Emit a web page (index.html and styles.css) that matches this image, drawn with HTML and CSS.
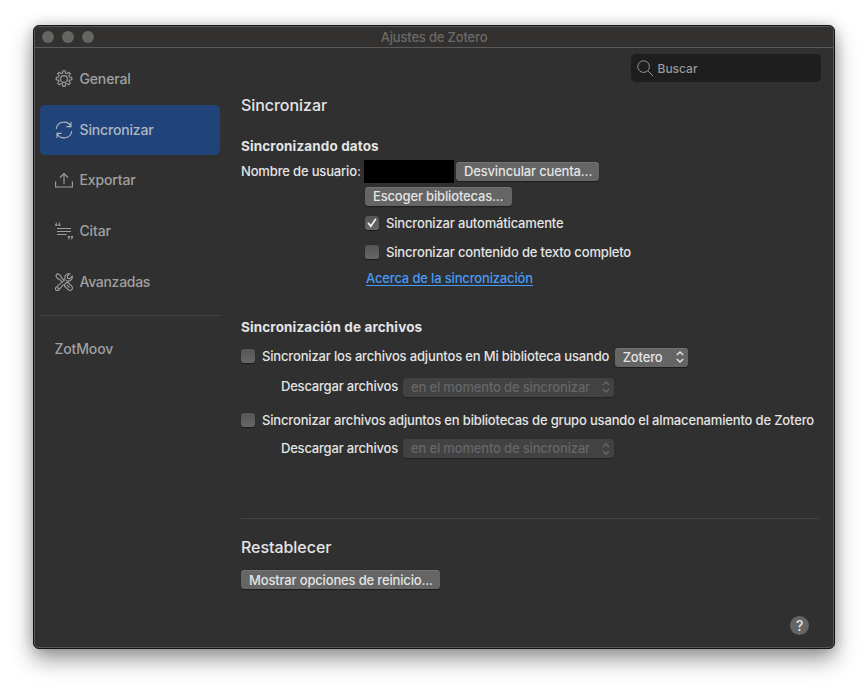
FILE: index.html
```html
<!DOCTYPE html>
<html lang="es">
<head>
<meta charset="utf-8">
<title>Ajustes de Zotero</title>
<link rel="stylesheet" href="styles.css">
</head>
<body>
<div class="window">
  <header class="titlebar">
    <div class="lights"><i></i><i></i><i></i></div>
    <span class="title">Ajustes de Zotero</span>
  </header>
  <div class="body">
    <nav class="sidebar">
      <div class="item">
        <svg viewBox="0 0 18 18"><circle cx="9" cy="9" r="3.4"/><path d="M7.500 3.200 7.900.8h2.200l.4 2.400 1.200.5 2-1.400 1.600 1.600-1.400 2 .5 1.200 2.400.4v2.200l-2.400.4-.5 1.200 1.400 2-1.600 1.600-2-1.400-1.200.5-.4 2.400H7.900l-.4-2.400-1.200-.5-2 1.400-1.600-1.600 1.400-2-.5-1.200-2.400-.4V7.500l2.400-.4.5-1.200-1.400-2 1.600-1.600 2 1.400z"/></svg>
        <span class="t-general">General</span>
      </div>
      <div class="item selected">
        <svg viewBox="0 0 18 18"><path d="M1.200 8A7.800 7.800 0 0 1 15.800 5.300M16 1v4.600h-4.600M16.800 10A7.800 7.800 0 0 1 2.200 12.700M2 17v-4.600h4.600"/></svg>
        <span class="t-sync">Sincronizar</span>
      </div>
      <div class="item">
        <svg viewBox="0 0 18 18"><path d="M.6 10.500V16h16.800v-5.500M9 13V2.500M5 6.500l4-4 4 4"/></svg>
        <span class="t-export">Exportar</span>
      </div>
      <div class="item">
        <svg viewBox="0 0 18 18"><path d="M2 6.500h14M2 9.500h14M2 12.500h9.500"/><path class="solid" d="M.2 3.700C.2 1.700.8.600 2.200.2v.8c-.6.300-.8.600-.8 1.200h.9v1.900H.2zM3.300 3.700c0-2 .6-3.100 2-3.500v.8c-.6.300-.8.600-.8 1.200h.9v1.900H3.300zM15 14.300c0 2-.6 3.100-2 3.500V17c.6-.3.800-.6.800-1.200h-.9v-1.900H15zM18 14.300c0 2-.6 3.100-2 3.500V17c.6-.3.800-.6.800-1.200h-.9v-1.900H18z"/></svg>
        <span class="t-cite">Citar</span>
      </div>
      <div class="item">
        <svg viewBox="0 0 18 18"><path d="M.7 2.500 2.500.7l3.200 1.900.5 1.800 2.700 2.700M.7 2.500l1.900 3.200 1.800.5L7 8.800M10.700 10.300l.8-.8 1.700.1 3.500 3.500a2.500 2.500 0 0 1-3.600 3.600l-3.500-3.500-.1-1.700zM12 12l2.600 2.600M11 7.800l2 .3a4 4 0 0 0 4.200-4.900l-2.400 2.400-2.100-.4-.4-2.100L14.700.8a4 4 0 0 0-4.900 4.200l.2 1.800-8.500 7.100a2 2 0 1 0 2.700 2.700l4.400-5.200"/><circle cx="3.200" cy="15" r=".4"/></svg>
        <span class="t-adv">Avanzadas</span>
      </div>
      <hr>
      <div class="item plugin"><span class="t-zot">ZotMoov</span></div>
    </nav>
    <main class="content">
      <div class="search">
        <svg viewBox="0 0 17 17"><circle cx="6.600" cy="6.600" r="5.800"/><path d="m10.800 10.800 5.400 5.400"/></svg>
        <span class="t-search">Buscar</span>
      </div>
      <h1 class="page-title">Sincronizar</h1>

      <h2>Sincronizando datos</h2>
      <div class="row account">
        <span class="label">Nombre de usuario:</span>
        <span class="username"></span>
        <button class="unlink">Desvincular cuenta...</button>
      </div>
      <div class="row choose inset"><button class="libraries">Escoger bibliotecas...</button></div>
      <label class="row auto inset"><i class="check"><svg viewBox="0 0 14 14"><path d="m3.500 7.400 2.300 2.900 4.700-7"/></svg></i>Sincronizar automáticamente</label>
      <label class="row full inset"><i class="check"></i>Sincronizar contenido de texto completo</label>
      <div class="row about inset"><a>Acerca de la sincronización</a></div>

      <h2 class="files">Sincronización de archivos</h2>
      <div class="row mine"><i class="check"></i><span>Sincronizar los archivos adjuntos en Mi biblioteca usando</span>
        <span class="select zotero"><span>Zotero</span><svg viewBox="0 0 8 12"><path d="m.8 4 3.200-3 3.200 3M.8 8 4 11l3.200-3"/></svg></span></div>
      <div class="row download"><span class="caption">Descargar archivos</span>
        <span class="select disabled"><span>en el momento de sincronizar</span><svg viewBox="0 0 8 12"><path d="m.8 4 3.200-3 3.200 3M.8 8 4 11l3.200-3"/></svg></span></div>
      <div class="row group"><i class="check"></i><span>Sincronizar archivos adjuntos en bibliotecas de grupo usando el almacenamiento de Zotero</span></div>
      <div class="row download last"><span class="caption">Descargar archivos</span>
        <span class="select disabled"><span>en el momento de sincronizar</span><svg viewBox="0 0 8 12"><path d="m.8 4 3.200-3 3.200 3M.8 8 4 11l3.200-3"/></svg></span></div>

      <hr>
      <h1 class="reset-title">Restablecer</h1>
      <button class="reset">Mostrar opciones de reinicio...</button>
      <div class="help">?</div>
    </main>
  </div>
</div>
</body>
</html>
```
FILE: styles.css
```css
* { box-sizing: border-box; }
body {
  margin: 0;
  padding: 25px 33px;
  height: 690px;
  overflow: hidden;
  background: #fff;
  color: #e4e4e4;
  font: 500 13px/18px Inter, sans-serif;
  letter-spacing: -.16px;
}
.window {
  width: 802px;
  height: 624px;
  border: 1px solid #131313;
  border-radius: 6px;
  background: #303030;
  box-shadow: inset 0 0 0 1px #595959, 0 11px 22px rgba(0,0,0,.38), 0 0 14px rgba(0,0,0,.2);
  padding: 1px;
  white-space: nowrap;
}
.titlebar {
  height: 21px;
  background: #33312f;
  border-bottom: 1px solid #5a5a5a;
  border-radius: 4px 4px 0 0;
  display: grid;
  grid-template-columns: 1fr auto 1fr;
  align-items: center;
}
.lights { display: flex; gap: 8px; padding-left: 7px; }
.lights i { width: 12px; height: 12px; border-radius: 50%; background: #656564; }
.title { color: #6b6a68; letter-spacing: -.17px; }
.body { display: flex; height: 599px; }
.sidebar { width: 206px; padding: 6px 0 0 5px; }
.item {
  width: 180px;
  height: 50px;
  margin-bottom: 1px;
  padding-left: 15px;
  border-radius: 5px;
  display: flex;
  align-items: center;
  gap: 6.5px;
  color: #a0a0a0;
  font-size: 14px;
}
.item svg { width: 18px; height: 18px; }
.selected { margin-bottom: 0; background: #20447a; color: #b0b7c2; }
.t-adv { letter-spacing: -.3px; }
.plugin { padding-left: 14.5px; }
svg { display: block; flex: none; fill: none; stroke: currentColor; stroke-width: 1.1; }
.solid { fill: currentColor; stroke: none; }
hr { border: 0; height: 1px; background: #434343; margin: 0; }
.sidebar hr { width: 180px; margin: 8px 0; }
.content { width: 592px; padding-top: 6px; display: flex; flex-direction: column; }
.search {
  width: 190px;
  height: 28px;
  margin-left: 390px;
  padding-left: 5.5px;
  border-radius: 5px;
  background: #1e1e1e;
  display: flex;
  align-items: center;
  gap: 4px;
  color: #989898;
  font-size: 12px;
  letter-spacing: 0;
}
.search svg { width: 17px; height: 17px; stroke-width: 1; }
.t-search { padding-top: 2px; }
h1, h2 { margin: 0; display: flex; align-items: center; }
h1 { font-size: 16px; font-weight: 500; letter-spacing: -.05px; }
h2 { height: 28px; margin-top: 4px; font-size: 13.5px; font-weight: 700; letter-spacing: .13px; }
.page-title { height: 46px; }
.row { display: flex; align-items: center; }
.inset { padding-left: 124px; }
.account { height: 23px; }
.label { width: 123px; margin-top: -1px; }
.username { width: 90px; height: 23px; background: #000; }
button, .select {
  border: 0;
  height: 19px;
  padding: 0 0 0 8px;
  border-radius: 3.5px;
  background: #656565;
  box-shadow: inset 0 1px 0 #747474, 0 .5px 1px #1c1c1c;
  color: #e4e4e4;
  font: inherit;
  letter-spacing: inherit;
  line-height: 19px;
  text-align: left;
}
.unlink { width: 143px; margin-left: 2px; }
.choose { height: 25px; margin-top: 1px; }
.libraries { width: 147px; }
.auto { height: 27px; }
.full { height: 29px; margin-top: 1px; }
.about { height: 23px; padding-left: 125px; }
.about a { color: #459bf8; text-decoration: underline; text-underline-offset: 2px; text-decoration-skip-ink: none; }
.check {
  width: 14px;
  height: 14px;
  margin-right: 7px;
  flex: none;
  border-radius: 3px;
  background: linear-gradient(#555, #666);
  box-shadow: 0 .5px 1px #1c1c1c;
}
.check svg { stroke: #f0f0f0; stroke-width: 1.7; stroke-linecap: round; }
.files { margin-top: 24px; }
.mine { height: 28px; margin-top: 1px; }
.select { display: flex; align-items: center; justify-content: space-between; padding-right: 4px; }
.select svg { width: 8px; height: 12px; stroke-width: 1.4; }
.zotero { width: 73px; margin: 2px 0 0 5.500px; }
.download { height: 30px; margin-top: 2px; padding-left: 40px; }
.caption { width: 117px; margin-top: -2px; letter-spacing: -.2px; }
.disabled { width: 211px; margin-left: 5px; background: #424242; color: #666; box-shadow: 0 .5px 1px #242424; }
.group { height: 36px; }
.last { height: 21px; margin-top: 0; }
.content hr { width: 578px; margin: 59px 0 13px; }
.reset-title { height: 30px; }
.reset { width: 199px; margin-top: 8px; padding-top: 1px; }
.help {
  width: 19px;
  height: 19px;
  margin: 27px 0 0 549px;
  border-radius: 50%;
  background: #656565;
  text-align: center;
  line-height: 19px;
  font-size: 14px;
}
```
